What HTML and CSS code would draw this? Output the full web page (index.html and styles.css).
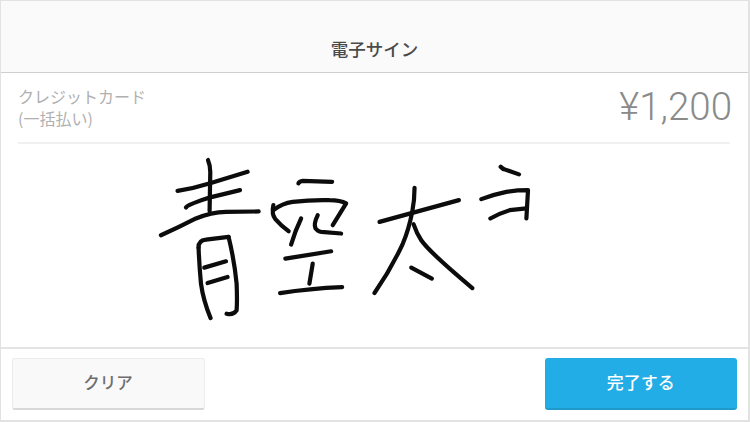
FILE: index.html
```html
<!DOCTYPE html>
<html lang="ja">
<head>
<meta charset="utf-8">
<title>電子サイン</title>
<link rel="stylesheet" href="styles.css">
</head>
<body>
<div class="frame">
  <header class="header"><h1 class="title">電子サイン</h1></header>
  <section class="summary">
    <div class="summary-inner">
      <p class="method">クレジットカード<br>(一括払い)</p>
      <p class="price">¥1,200</p>
    </div>
  </section>
  <main class="pad">
    <svg class="sign" viewBox="2 144 746 203" preserveAspectRatio="none" aria-label="署名">
      <g class="ink">
        <path d="M208.7 160Q211 165 211 172L210.3 210.7"/>
        <path d="M178.3 190.7Q195 188 210 183.3L248.3 171.7"/>
        <path d="M186.7 207.3Q189 204 213 196.7L240.7 190"/>
        <path d="M161.7 235Q180 227 196.7 218.3Q212 212 226.7 211.7L259.3 211.3"/>
        <path d="M199.3 247.3Q199 240 206.7 239.3L229.3 236.7"/>
        <path d="M199.3 247.3Q200 265 201.7 283.3Q204 300 211.3 317.7"/>
        <path d="M229.3 236.7Q235 260 237.3 283.3Q238 300 237.3 310Q234 315 227.3 313.3"/>
        <path d="M205 267.3L226.7 261"/>
        <path d="M208.3 282.7L228.3 276.7"/>
        <path d="M299 183.3Q300 181 303.3 180.7L332.7 181.7"/>
        <path d="M274 205Q272 214 276 219Q282 226 289.3 231"/>
        <path d="M274 210Q283 203 293.3 201.7Q312 199.5 330 200Q341 200 346.7 203.3L333.3 225"/>
        <path d="M301.7 218.3Q296 230 291.7 244.3"/>
        <path d="M318.3 215Q314 224 316 228Q319 232 325 232L341.7 233.3"/>
        <path d="M286 258.3L331.7 251"/>
        <path d="M313.3 263.3L310 283.3"/>
        <path d="M280.7 292.7Q310 288 342.7 286.7"/>
        <path d="M415 187.7Q415 200 412.7 211.7Q409 230 403.3 243.3Q392 268 375 292.7"/>
        <path d="M380 221.7L459.3 200"/>
        <path d="M414 224Q417 233 421.7 240Q430 252 472.7 287.7"/>
        <path d="M411.7 267.3L432.3 278.3"/>
        <path d="M501 166.7Q503 169 505 169.3L519.3 174.3"/>
        <path d="M481.7 199Q495 194 506.7 191.7Q517 190 528.3 190L526.7 218.3"/>
        <path d="M490.7 218.3Q500 213 510 210L526.7 208.3"/>
      </g>
    </svg>
  </main>
  <footer class="footer">
    <button class="btn btn-clear" type="button">クリア</button>
    <button class="btn btn-done" type="button">完了する</button>
  </footer>
</div>
</body>
</html>
```
FILE: styles.css
```css
* { box-sizing: border-box; }
html, body { margin: 0; height: 100%; }
body {
  background: #fff;
  font-family: "Noto Sans CJK JP", "Noto Sans", sans-serif;
  overflow: hidden;
}
.frame {
  width: 750px;
  height: 422px;
  display: flex;
  flex-direction: column;
  border: 1.5px solid #e2e2e2;
  border-right-width: 2px;
  border-bottom-width: 2px;
}
.header {
  height: 71.5px;
  flex: none;
  background: #fafafa;
  border-bottom: 1px solid #cfcfcf;
  display: flex;
  align-items: flex-end;
  justify-content: center;
  padding-bottom: 12px;
}
.title {
  margin: 0;
  font-size: 17.5px;
  line-height: 22px;
  font-weight: 500;
  color: #4a4a4a;
}
.summary {
  flex: none;
  padding: 0 18px 0 17px;
}
.summary-inner {
  height: 71px;
  border-bottom: 2px solid #f0f0f0;
  display: flex;
  justify-content: space-between;
  align-items: flex-start;
}
.method {
  margin: 12.5px 0 0;
  font-size: 16px;
  line-height: 22px;
  font-weight: 400;
  color: #b0b0b0;
}
.price {
  margin: 11px 0 0 0;
  position: relative;
  left: 2px;
  font-family: Roboto, "Liberation Sans", sans-serif;
  font-weight: 300;
  font-size: 38.5px;
  line-height: 46px;
  color: #8a8a8a;
}
.pad { flex: 1; min-height: 0; }
.sign { display: block; width: 100%; height: 100%; }
.ink path {
  fill: none;
  stroke: #0c0c0c;
  stroke-width: 4.2;
  stroke-linecap: round;
  stroke-linejoin: round;
}
.footer {
  flex: none;
  height: 73px;
  border-top: 2px solid #e4e4e4;
  padding: 9px 11px 10px 10.5px;
  display: flex;
  justify-content: space-between;
  align-items: flex-start;
}
.btn {
  height: 52px;
  border-radius: 3px;
  font-family: inherit;
  font-weight: 500;
  padding: 0 0 3px;
}
.btn-clear {
  width: 193px;
  font-size: 16.5px;
  background: #f9f9f9;
  border: 1px solid #ececec;
  border-bottom: 2px solid #d8d8d8;
  color: #6e6e6e;
}
.btn-done {
  width: 192.5px;
  font-size: 17px;
  background: #22ade6;
  border: 0;
  border-bottom: 2px solid #1f9acb;
  color: #fff;
}
```
